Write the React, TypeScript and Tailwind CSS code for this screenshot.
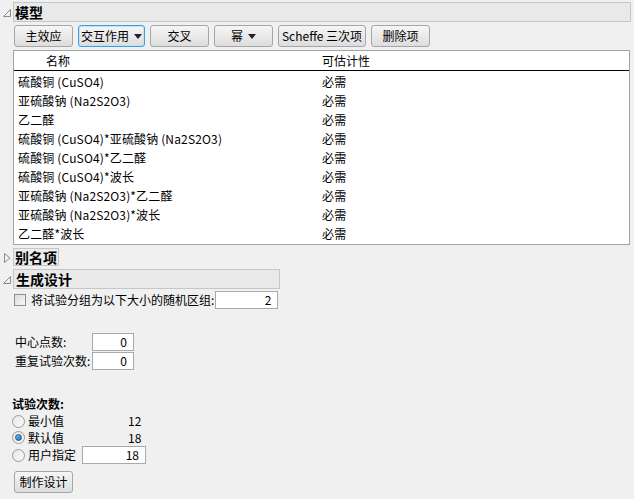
import React from "react";

const font = { fontFamily: '"Noto Sans CJK SC", "Noto Sans", sans-serif' };

function OpenTri() {
  return (
    <svg width="10" height="10" viewBox="0 0 10 10" className="shrink-0">
      <path d="M1.5 8.5 L8.5 8.5 L8.5 1.5 Z" fill="none" stroke="#8a8a8a" strokeWidth="1" />
    </svg>
  );
}

function ClosedTri() {
  return (
    <svg width="10" height="12" viewBox="0 0 10 12" className="shrink-0">
      <path d="M2.5 1.5 L8 6 L2.5 10.5 Z" fill="none" stroke="#8a8a8a" strokeWidth="1" />
    </svg>
  );
}

function Btn({ w, children, focus }: { w: string; children: React.ReactNode; focus?: boolean }) {
  return (
    <div
      className={
        "h-[22px] flex items-center justify-center rounded-[3px] text-[12px] text-black bg-gradient-to-b from-[#f6f6f6] to-[#dddddd] " +
        w +
        (focus ? " border border-[#3c9fd8] ring-1 ring-inset ring-[#bfe3f7]" : " border border-[#a6a6a6]")
      }
    >
      {children}
    </div>
  );
}

function Caret() {
  return (
    <svg width="8" height="5" viewBox="0 0 8 5" className="ml-[5px]">
      <path d="M0 0 L8 0 L4 5 Z" fill="#222" />
    </svg>
  );
}

function Field({ w, value }: { w: string; value: string }) {
  return (
    <div className={"h-[18px] bg-white border border-[#a9a9a9] flex items-center justify-end pr-[6px] text-[12px] " + w}>
      {value}
    </div>
  );
}

function Radio({ on }: { on?: boolean }) {
  return (
    <div className="w-[13px] h-[13px] rounded-full border border-[#9a9a9a] bg-gradient-to-br from-[#e6e6e6] to-[#fafafa] flex items-center justify-center shrink-0">
      {on && <div className="w-[7px] h-[7px] rounded-full bg-gradient-to-br from-[#6cc4ee] to-[#1a6fa8] border border-[#1d5f8e]" />}
    </div>
  );
}

const rows = [
  "硫酸铜 (CuSO4)",
  "亚硫酸钠 (Na2S2O3)",
  "乙二醛",
  "硫酸铜 (CuSO4)*亚硫酸钠 (Na2S2O3)",
  "硫酸铜 (CuSO4)*乙二醛",
  "硫酸铜 (CuSO4)*波长",
  "亚硫酸钠 (Na2S2O3)*乙二醛",
  "亚硫酸钠 (Na2S2O3)*波长",
  "乙二醛*波长",
];

export default function App() {
  return (
    <div style={font} className="w-[634px] h-[499px] bg-[#f0f0f0] text-[12px] text-black overflow-hidden pt-[2px]">
      {/* 模型 */}
      <div className="flex items-center h-[20px]">
        <div className="w-[13px] flex justify-center pl-[1px] pt-[2px]">
          <OpenTri />
        </div>
        <div className="flex-1 mr-[3px] h-[20px] border border-[#c6c6c6] bg-[#e9e9e9] flex items-center pl-[1px] text-[14px] font-bold leading-none">
          模型
        </div>
      </div>

      <div className="flex items-center gap-[5px] pl-[14px] mt-[3px]">
        <Btn w="w-[59px]">主效应</Btn>
        <Btn w="w-[67px]" focus>
          交互作用
          <Caret />
        </Btn>
        <Btn w="w-[59px]">交叉</Btn>
        <Btn w="w-[59px]">
          幂
          <Caret />
        </Btn>
        <Btn w="w-[88px]">Scheffe 三次项</Btn>
        <Btn w="w-[59px]">删除项</Btn>
      </div>

      <div className="ml-[13px] mt-[3px] w-[617px] h-[195px] bg-white border border-[#a3a3a3]">
        <div className="flex h-[20px] items-center border-b-[1.5px] border-black">
          <div className="w-[308px] pl-[32px]">名称</div>
          <div>可估计性</div>
        </div>
        <div className="pt-[1px] tracking-[0.15px]">
          {rows.map((r) => (
            <div key={r} className="flex h-[19px] items-center">
              <div className="w-[308px] pl-[4px]">{r}</div>
              <div>必需</div>
            </div>
          ))}
        </div>
      </div>

      {/* 别名项 */}
      <div className="flex items-center mt-[3px] h-[18px]">
        <div className="w-[13px] flex justify-center pt-[1px]">
          <ClosedTri />
        </div>
        <div className="px-[1px] h-[18px] border border-[#c6c6c6] bg-[#ececec] flex items-center text-[14px] font-bold leading-none">
          别名项
        </div>
      </div>

      {/* 生成设计 */}
      <div className="flex items-center mt-[3px] h-[20px]">
        <div className="w-[13px] flex justify-center pt-[2px]">
          <OpenTri />
        </div>
        <div className="w-[267px] h-[20px] border border-[#c6c6c6] bg-[#e9e9e9] flex items-center pl-[2px] text-[14px] font-bold leading-none">
          生成设计
        </div>
      </div>

      <div className="flex items-center mt-[2px] pl-[14px] h-[18px]">
        <div className="w-[12px] h-[12px] border border-[#8f8f8f] bg-gradient-to-br from-[#dcdcdc] to-[#f8f8f8] mr-[5px]" />
        <span>将试验分组为以下大小的随机区组:</span>
        <div className="ml-[1px]">
          <Field w="w-[63px]" value="2" />
        </div>
      </div>

      <div className="mt-[24px] pl-[15px] flex flex-col gap-[1px]">
        <div className="flex items-center h-[18px]">
          <span className="w-[77px]">中心点数:</span>
          <Field w="w-[42px]" value="0" />
        </div>
        <div className="flex items-center h-[18px]">
          <span className="w-[77px]">重复试验次数:</span>
          <Field w="w-[42px]" value="0" />
        </div>
      </div>

      <div className="mt-[26px] pl-[12px] font-semibold h-[16px] flex items-center">试验次数:</div>
      <div className="pl-[12px] mt-[1px] flex flex-col">
        <div className="flex items-center h-[16px]">
          <Radio />
          <span className="ml-[3px] w-[100px]">最小值</span>
          <span>12</span>
        </div>
        <div className="flex items-center h-[17px]">
          <Radio on />
          <span className="ml-[3px] w-[100px]">默认值</span>
          <span>18</span>
        </div>
        <div className="flex items-center h-[18px]">
          <Radio />
          <span className="ml-[3px] w-[54px]">用户指定</span>
          <Field w="w-[64px]" value="18" />
        </div>
      </div>

      <div className="pl-[14px] mt-[7px]">
        <Btn w="w-[59px]">制作设计</Btn>
      </div>
    </div>
  );
}
